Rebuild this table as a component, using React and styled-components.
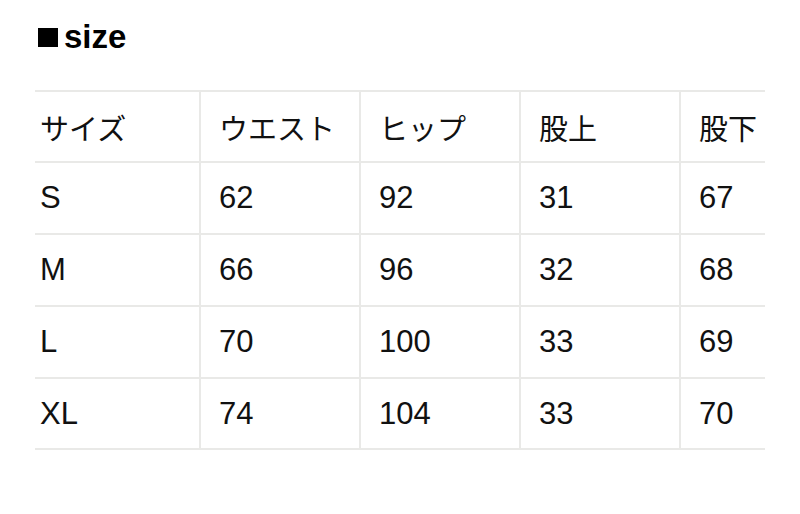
import React from "react";
import styled, { createGlobalStyle } from "styled-components";

const GlobalStyle = createGlobalStyle`
  html, body {
    margin: 0;
    padding: 0;
    background: #ffffff;
  }
  body {
    font-family: "Liberation Sans", "Noto Sans CJK JP", sans-serif;
    color: #111111;
  }
`;

const Page = styled.div`
  width: 800px;
  height: 514px;
  box-sizing: border-box;
  padding: 20px 0 0 35px;
`;

const Title = styled.h2`
  margin: 0 0 37px 3px;
  font-size: 33px;
  line-height: 33px;
  font-weight: 700;
  color: #000000;
  display: flex;
  align-items: center;
`;

const Mark = styled.span`
  display: inline-block;
  width: 20px;
  height: 19px;
  background: #000000;
  margin-right: 6px;
  margin-top: 2px;
`;

const Table = styled.div`
  width: 730px;
  border-top: 2px solid #e9e9e7;
`;

const Row = styled.div`
  display: grid;
  grid-template-columns: 164px 160px 160px 160px 86px;
  height: ${({ short }) => (short ? "71px" : "72px")};
  box-sizing: border-box;
  border-bottom: 2px solid #e9e9e7;
`;

const Cell = styled.div`
  display: flex;
  align-items: center;
  box-sizing: border-box;
  padding-left: ${({ first }) => (first ? "5px" : "18px")};
  border-left: ${({ first }) => (first ? "none" : "2px solid #e9e9e7")};
  font-size: ${({ head }) => (head ? "29px" : "31px")};
  font-weight: 400;
  color: #111111;
  white-space: nowrap;
  overflow: hidden;
`;

const header = ["サイズ", "ウエスト", "ヒップ", "股上", "股下"];

const rows = [
  ["S", "62", "92", "31", "67"],
  ["M", "66", "96", "32", "68"],
  ["L", "70", "100", "33", "69"],
  ["XL", "74", "104", "33", "70"],
];

export default function App() {
  return (
    <>
      <GlobalStyle />
      <Page>
        <Title>
          <Mark />
          size
        </Title>
        <Table>
          {[header, ...rows].map((row, i) => (
            <Row key={i} short={i === 0 || i === rows.length}>
              {row.map((value, j) => (
                <Cell key={j} first={j === 0} head={i === 0}>
                  {value}
                </Cell>
              ))}
            </Row>
          ))}
        </Table>
      </Page>
    </>
  );
}
